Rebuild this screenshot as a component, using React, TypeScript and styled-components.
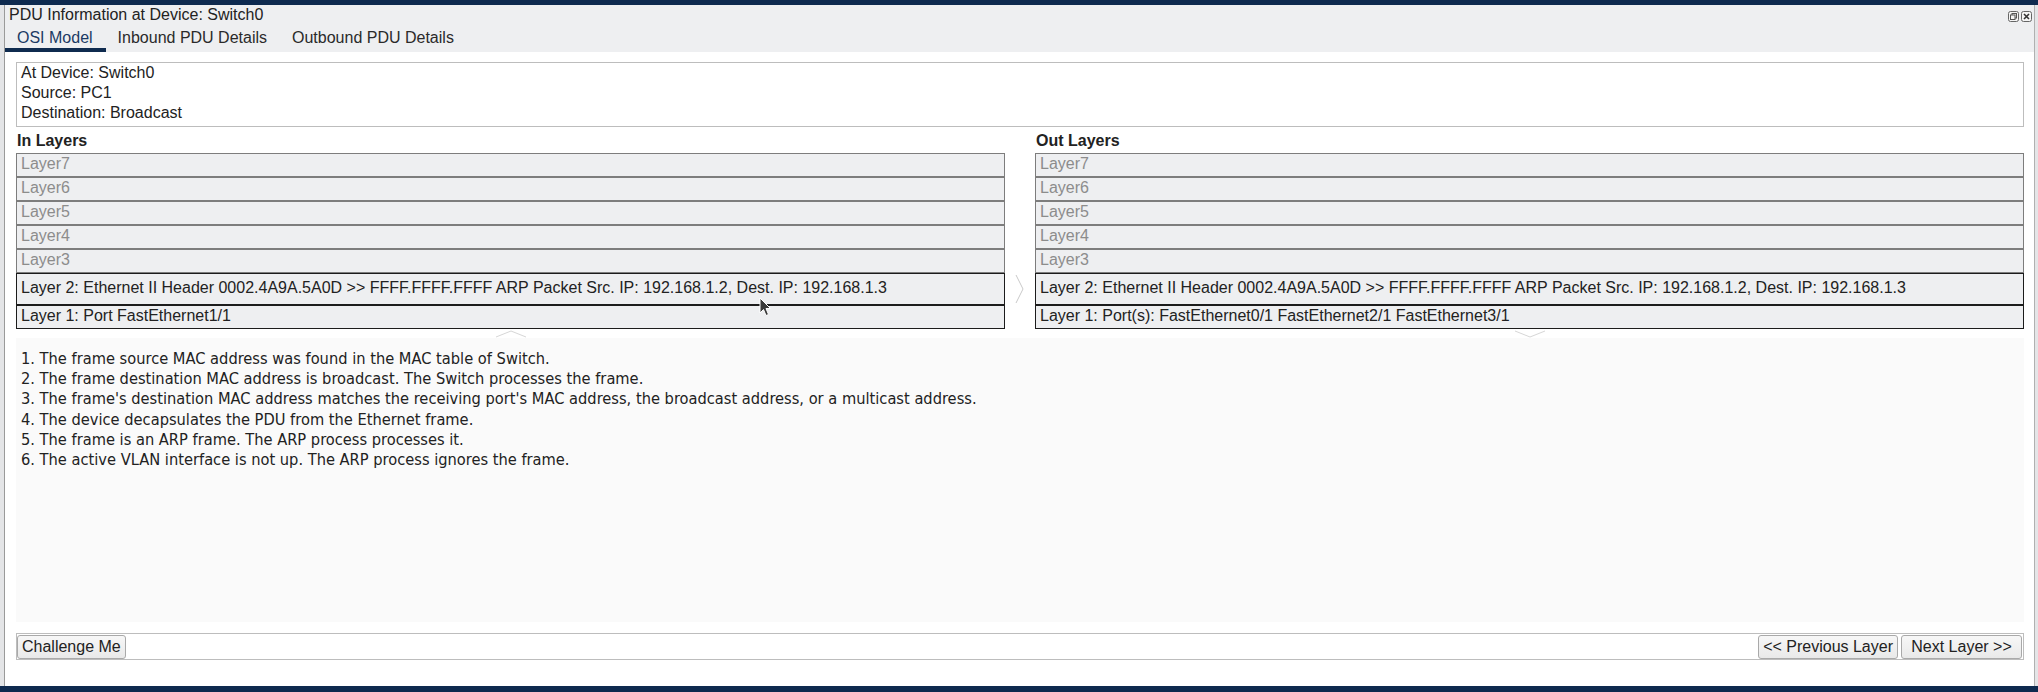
import React from "react";
import styled, { createGlobalStyle } from "styled-components";

const GlobalStyle = createGlobalStyle`
  html, body { margin: 0; padding: 0; }
  body {
    width: 2038px;
    height: 692px;
    overflow: hidden;
    background: #0e2a4f;
    font-family: "Liberation Sans", Arial, sans-serif;
    color: #222;
  }
`;

const Screen = styled.div`
  position: relative;
  width: 2038px;
  height: 692px;
  box-sizing: border-box;
  padding: 5px 0 6px 0;
  background: #0e2a4f;
  display: flex;
`;

const SideEdge = styled.div<{ $w: number }>`
  width: ${(p) => p.$w}px;
  flex: none;
  background: #e4e5e7;
`;

const Window = styled.div`
  flex: 1;
  display: flex;
  flex-direction: column;
  background: #fff;
  border-left: 1px solid #9a9a9a;
  border-right: 1px solid #b0b0b0;
`;

const TitleBar = styled.div`
  height: 20px;
  flex: none;
  background: #eeeff1;
  display: flex;
  align-items: center;
  justify-content: space-between;
  padding: 0 2px 0 4px;
  font-size: 16px;
  line-height: 20px;
  color: #222;
`;

const TitleIcons = styled.div`
  display: flex;
  gap: 2px;
  align-items: center;
  padding-top: 2px;
`;

const TabBar = styled.div`
  height: 27px;
  flex: none;
  display: flex;
  background: #eeeff1;
`;

const Tab = styled.div<{ $active?: boolean }>`
  height: 27px;
  box-sizing: border-box;
  padding: 1px 13px 0 12px;
  font-size: 16px;
  line-height: 24px;
  color: ${(p) => (p.$active ? "#1b3a64" : "#2a2a2a")};
  border-bottom: 4px solid ${(p) => (p.$active ? "#0f2b4f" : "transparent")};
`;

const Body = styled.div`
  flex: 1;
  display: flex;
  flex-direction: column;
  padding: 10px 10px 0 11px;
`;

const InfoBox = styled.div`
  height: 65px;
  box-sizing: border-box;
  border: 1px solid #bdbdbd;
  padding: 0 4px;
  font-size: 16px;
  line-height: 20px;
`;

const Columns = styled.div`
  display: grid;
  grid-template-columns: 989px 30px 989px;
`;

const LayerColumn = styled.div`
  display: flex;
  flex-direction: column;
`;

const ColumnLabel = styled.div`
  height: 26px;
  font-size: 16px;
  font-weight: bold;
  line-height: 27px;
  padding-left: 1px;
`;

const LayerRow = styled.div<{ $active?: boolean; $tall?: boolean }>`
  height: ${(p) => (p.$tall ? 32 : 24)}px;
  box-sizing: border-box;
  border: 1px solid ${(p) => (p.$active ? "#1c1c1c" : "#7d7d7d")};
  background: #eeeff1;
  padding: ${(p) => (p.$tall ? "4px 4px 0" : "0 4px")};
  font-size: 16px;
  line-height: 19px;
  color: ${(p) => (p.$active ? "#222" : "#8c8c8c")};
  white-space: nowrap;
  overflow: hidden;
`;

const ChevronRow = styled.div`
  height: 9px;
  display: flex;
  justify-content: center;
  align-items: center;
`;

const ArrowGutter = styled.div`
  display: flex;
  justify-content: center;
  padding-top: 147px;
`;

const StepsPanel = styled.div`
  height: 284px;
  box-sizing: border-box;
  background: #fafafa;
  padding: 11px 5px 0;
  font-family: "Liberation Sans Narrow", "DejaVu Sans Condensed", "Liberation Sans", sans-serif;
  font-size: 16.3px;
  line-height: 20.2px;
  color: #222;
`;

const ButtonBar = styled.div`
  margin-top: 11px;
  height: 27px;
  box-sizing: border-box;
  border: 1px solid #bdbdbd;
  display: flex;
  justify-content: space-between;
  align-items: center;
`;

const ButtonGroup = styled.div`
  display: flex;
  gap: 3px;
  padding-right: 1px;
`;

const Button = styled.button<{ $minWidth?: number }>`
  height: 24px;
  min-width: ${(p) => p.$minWidth ?? 0}px;
  box-sizing: border-box;
  margin: 0;
  padding: 0 4px;
  border: 1px solid #a9a9a9;
  border-radius: 3px;
  background: linear-gradient(#f7f7f7, #e9e9e9);
  font-family: "Liberation Sans", Arial, sans-serif;
  font-size: 16px;
  color: #222;
  line-height: 22px;
`;

const Cursor = styled.svg`
  position: absolute;
  left: 759px;
  top: 297px;
`;

const RestoreIcon = () => (
  <svg width="11" height="11" viewBox="0 0 11 11">
    <rect x="0.5" y="0.5" width="10" height="10" rx="2" fill="#f4f4f4" stroke="#666" />
    <rect x="4" y="2.5" width="4.5" height="4.5" fill="none" stroke="#555" />
    <rect x="2.5" y="4" width="4.5" height="4.5" fill="#f4f4f4" stroke="#555" />
  </svg>
);

const CloseIcon = () => (
  <svg width="11" height="11" viewBox="0 0 11 11">
    <rect x="0.5" y="0.5" width="10" height="10" rx="2" fill="#f4f4f4" stroke="#666" />
    <path d="M3 3 L8 8 M8 3 L3 8" stroke="#333" strokeWidth="1.6" />
  </svg>
);

const RightArrow = () => (
  <svg width="10" height="30" viewBox="0 0 10 30">
    <path d="M1 1 L8 15 L1 29" fill="none" stroke="#c9c9c9" strokeWidth="1" />
  </svg>
);

const Chevron = ({ up }: { up: boolean }) => (
  <svg width="32" height="8" viewBox="0 0 32 8">
    <path
      d={up ? "M1 7 L16 1 L31 7" : "M1 1 L16 7 L31 1"}
      fill="none"
      stroke="#d6d6d6"
      strokeWidth="1"
    />
  </svg>
);

const grey = ["Layer7", "Layer6", "Layer5", "Layer4", "Layer3"];
const layer2 =
  "Layer 2: Ethernet II Header 0002.4A9A.5A0D >> FFFF.FFFF.FFFF ARP Packet Src. IP: 192.168.1.2, Dest. IP: 192.168.1.3";

const steps = [
  "1. The frame source MAC address was found in the MAC table of Switch.",
  "2. The frame destination MAC address is broadcast. The Switch processes the frame.",
  "3. The frame's destination MAC address matches the receiving port's MAC address, the broadcast address, or a multicast address.",
  "4. The device decapsulates the PDU from the Ethernet frame.",
  "5. The frame is an ARP frame. The ARP process processes it.",
  "6. The active VLAN interface is not up. The ARP process ignores the frame.",
];

const Layers = ({ label, layer1, up }: { label: string; layer1: string; up: boolean }) => (
  <LayerColumn>
    <ColumnLabel>{label}</ColumnLabel>
    {grey.map((g) => (
      <LayerRow key={g}>{g}</LayerRow>
    ))}
    <LayerRow $active $tall>
      {layer2}
    </LayerRow>
    <LayerRow $active>{layer1}</LayerRow>
    <ChevronRow>
      <Chevron up={up} />
    </ChevronRow>
  </LayerColumn>
);

export default function App() {
  return (
    <>
      <GlobalStyle />
      <Screen>
        <SideEdge $w={4} />
        <Window>
          <TitleBar>
            <span>PDU Information at Device: Switch0</span>
            <TitleIcons>
              <RestoreIcon />
              <CloseIcon />
            </TitleIcons>
          </TitleBar>
          <TabBar>
            <Tab $active>OSI Model</Tab>
            <Tab>Inbound PDU Details</Tab>
            <Tab>Outbound PDU Details</Tab>
          </TabBar>
          <Body>
            <InfoBox>
              <div>At Device: Switch0</div>
              <div>Source: PC1</div>
              <div>Destination: Broadcast</div>
            </InfoBox>
            <Columns>
              <Layers label="In Layers" layer1="Layer 1: Port FastEthernet1/1" up />
              <ArrowGutter>
                <RightArrow />
              </ArrowGutter>
              <Layers
                label="Out Layers"
                layer1="Layer 1: Port(s): FastEthernet0/1 FastEthernet2/1 FastEthernet3/1"
                up={false}
              />
            </Columns>
            <StepsPanel>
              {steps.map((s) => (
                <div key={s}>{s}</div>
              ))}
            </StepsPanel>
            <ButtonBar>
              <Button>Challenge Me</Button>
              <ButtonGroup>
                <Button $minWidth={139}>&lt;&lt; Previous Layer</Button>
                <Button $minWidth={121}>Next Layer &gt;&gt;</Button>
              </ButtonGroup>
            </ButtonBar>
          </Body>
        </Window>
        <SideEdge $w={3} />
        <Cursor width="13" height="20" viewBox="0 0 13 20">
          <path d="M1 1 L1 16 L4.5 12.5 L7 18.5 L9.5 17.5 L7 11.5 L11.5 11.5 Z" fill="#3a3a3a" stroke="#fff" strokeWidth="1" />
        </Cursor>
      </Screen>
    </>
  );
}
